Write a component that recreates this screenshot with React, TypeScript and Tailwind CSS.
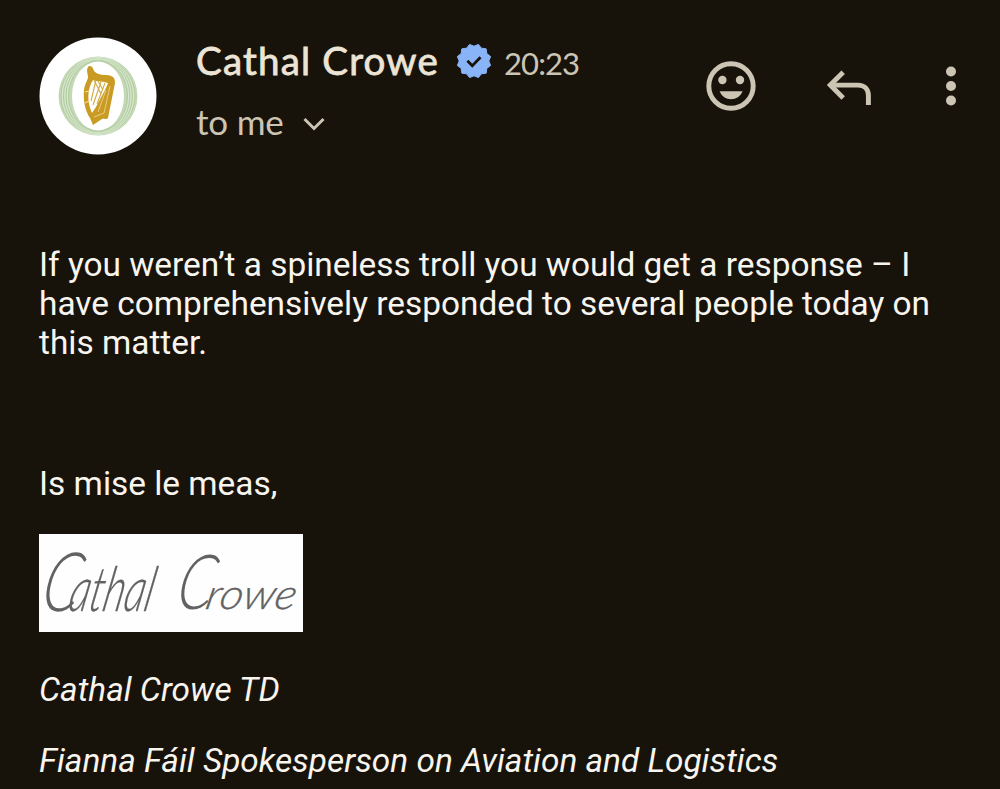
import React from "react";

type IconProps = {
  className?: string
};

const badgePoints = Array.from({ length: 24 }, (_, i) => {
  const r = i % 2 === 0 ? 17.2 : 14.8;
  const angle = (i * Math.PI) / 12 + Math.PI / 12;
  return `${18 + r * Math.sin(angle)},${18 - r * Math.cos(angle)}`;
}).join(" ");

function Harp() {
  return (
    <svg className="h-[118px] w-[118px] shrink-0" viewBox="0 0 118 118">
      <circle cx="59" cy="59" r="58.5" fill="#fff" />
      <circle cx="59" cy="59" r="39.5" fill="#c3d8b4" />
      <g fill="none" stroke="#a9c797" strokeWidth="0.7">
        <ellipse cx="59" cy="59" rx="37" ry="38" />
        <ellipse cx="59" cy="59" rx="34.5" ry="37" />
        <ellipse cx="59" cy="59" rx="32" ry="36" />
        <ellipse cx="59" cy="59" rx="29.5" ry="35" />
      </g>
      <g fill="none" stroke="#eaf3e4" strokeWidth="0.6">
        <ellipse cx="59" cy="59" rx="35.8" ry="38.5" />
        <ellipse cx="59" cy="59" rx="33.2" ry="37.5" />
        <ellipse cx="59" cy="59" rx="30.7" ry="36.5" />
      </g>
      <ellipse cx="59" cy="59" rx="26" ry="34.5" fill="#fff" />
      <path
        d="M51 29 C54 29 54 33 56 35 C62 40 68 36 74 40 C77 43 76 47 75 51 L69 81 C67 83 64 81 63 82 L54 88 L51 81 C46 74 44 63 45 53 C46 46 49 43 49 40 L48 34 C48 31 49 29 51 29 Z"
        fill="#c99b22"
      />
      <path d="M54 43 C48 52 48 65 53 76 L57 70 C62 60 66 54 69 46 C64 44 59 45 54 43 Z" fill="#fff" />
      <path d="M55 43 L62 57 M59 44 L64 53 M57 43 L52 64 M62 45 L54 68 M66 46 L58 67" stroke="#d2aa43" strokeWidth="1.1" />
      <path d="M71 49 L65 76 L55 80 M67 53 L59 75" fill="none" stroke="#eed28c" strokeWidth="0.9" />
      <path d="M46 55 L50 54 M46 66 L50 64" stroke="#f4e3b4" strokeWidth="1" />
    </svg>
  );
}

function Verified({ className }: IconProps) {
  return (
    <svg className={className} viewBox="0 0 36 36">
      <polygon points={badgePoints} fill="#8ab4f8" stroke="#8ab4f8" strokeWidth="1" strokeLinejoin="round" />
      <path d="M11.4 17.8 L16.3 22.7 L24.5 14.3" fill="none" stroke="#17130b" strokeWidth="2.8" />
    </svg>
  );
}

function Smile({ className }: IconProps) {
  return (
    <svg className={className} viewBox="0 0 50 50">
      <circle cx="25" cy="25" r="22.2" fill="none" stroke="currentColor" strokeWidth="4.9" />
      <circle cx="16.4" cy="19" r="4.2" fill="currentColor" />
      <circle cx="34" cy="19" r="4.2" fill="currentColor" />
      <path d="M13.6 30.2 H36.6 C34.5 35.5 30 38.2 25 38.2 C20 38.2 15.7 35.5 13.6 30.2 Z" fill="currentColor" />
    </svg>
  );
}

function Reply({ className }: IconProps) {
  return (
    <svg className={className} viewBox="0 0 46 36" fill="none" stroke="currentColor" strokeWidth="4.9">
      <path d="M17.2 2.2 L4.3 15.1 L17.2 28" />
      <path d="M4.3 15.1 H32 C38.5 15.1 42.4 19.5 42.4 25.5 V35" />
    </svg>
  );
}

// scanned signature image in the mail footer
function Signature() {
  return (
    <svg className="block h-[98px] w-[264px] overflow-visible bg-[#fefefe]" viewBox="0 0 264 98">
      <g fill="#626262" stroke="#626262" strokeWidth="0.3" fontFamily="Lato, sans-serif" fontStyle="italic" fontWeight="300" transform="skewX(-12)">
        <text x="16" y="77" fontSize="82" strokeWidth="0" textLength="37" lengthAdjust="spacingAndGlyphs">C</text>
        <text x="44" y="77" fontSize="62" textLength="84" lengthAdjust="spacingAndGlyphs">athal</text>
        <text x="151" y="75" fontSize="76" strokeWidth="0" textLength="36" lengthAdjust="spacingAndGlyphs">C</text>
        <text x="181" y="75" fontSize="42" textLength="90" lengthAdjust="spacingAndGlyphs">rowe</text>
      </g>
    </svg>
  );
}

function App() {
  return (
    <div className="h-[789px] w-full overflow-hidden bg-[#17130b] px-[39px] pt-[37px] font-[Roboto,sans-serif] text-[33.4px] leading-[39px] text-[#f8f5ef]">
      <header className="flex h-[118px] items-start">
        <Harp />
        <div className="ml-[39px] w-[510px] font-[Lato,sans-serif] text-[#cdc5b4]">
          <div className="flex h-12 items-center whitespace-nowrap">
            <span className="-mt-[2px] w-[260px] text-[38.5px] tracking-[1.2px] text-[#ece4d5] [-webkit-text-stroke:0.8px_#ece4d5]">Cathal Crowe</span>
            <Verified className="h-9 w-9 shrink-0" />
            <span className="ml-3 mt-1 text-[31px] tracking-[-0.9px]">20:23</span>
          </div>
          <div className="mt-[17px] flex items-center">
            <span className="text-[35px] tracking-[-0.2px]">to me</span>
            <svg className="ml-[19px] mt-[5px] h-4 w-[22px]" viewBox="0 0 22 16" fill="none" stroke="currentColor" strokeWidth="3">
              <path d="M1.5 3 L11 12.5 L20.5 3" />
            </svg>
          </div>
        </div>
        <div className="mt-6 flex text-[#cdc5b4]">
          <Smile className="h-[50px] w-[50px]" />
          <Reply className="ml-[70px] mt-[9px] h-9 w-[46px]" />
          <svg className="ml-[73px] mt-[5px] h-10 w-3" viewBox="0 0 12 40" fill="currentColor">
            <circle cx="6" cy="5.5" r="5" />
            <circle cx="6" cy="20" r="5" />
            <circle cx="6" cy="34.5" r="5" />
          </svg>
        </div>
      </header>
      <main className="whitespace-nowrap">
        <p className="mt-[90px]">
          <span>If you weren’t a spineless troll you would get a response – I</span><br />
          <span>have comprehensively responded to several people today on</span><br />
          <span>this matter.</span>
        </p>
        <p className="mt-[102px]">Is mise le meas,</p>
        <div className="mt-[31px]">
          <Signature />
        </div>
        <p className="mt-[38px] italic">Cathal Crowe TD</p>
        <p className="mt-[32px] italic">Fianna Fáil Spokesperson on Aviation and Logistics</p>
      </main>
    </div>
  );
}

export default App;
